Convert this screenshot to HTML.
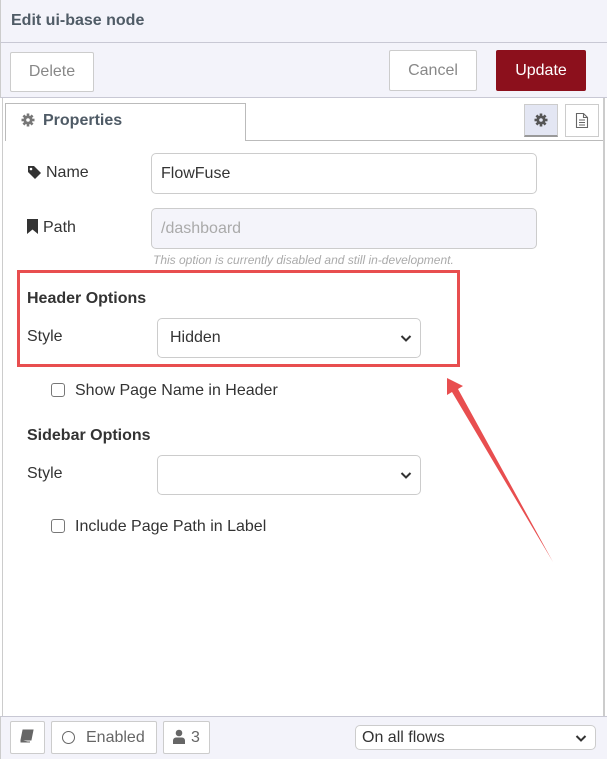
<!DOCTYPE html>
<html><head><meta charset="utf-8"><style>
*{box-sizing:border-box;margin:0;padding:0}
body{width:607px;height:759px;overflow:hidden;background:#fff;font-family:"Liberation Sans",Arial,sans-serif;font-size:16px;color:#333;position:relative}
.a{position:absolute}
.btn{position:absolute;border:1px solid #ccc;background:#fff;border-radius:2px;color:#888;text-align:center}
.inp{position:absolute;border:1px solid #ccc;border-radius:5px;background:#fff;padding-left:9px;color:#333}
.chev{position:absolute;right:8px;top:50%;margin-top:-5px}
.cb{position:absolute;width:14px;height:14px;border:1px solid #777;border-radius:3px;background:#fff}
</style></head><body>
<div class="a" style="left:0;top:0;width:607px;height:43px;background:#f3f3fa;border-bottom:1px solid #c8c8d4;border-left:1px solid #ccc"></div>
<div class="a" style="left:11px;top:12px;font-weight:bold;font-size:16px;color:#4f5b66">Edit ui-base node</div>
<div class="a" style="left:0;top:43px;width:607px;height:55px;background:#f3f3fa;border-bottom:1px solid #c8c8d4;border-left:1px solid #ccc"></div>
<div class="btn" style="left:10px;top:52px;width:84px;height:40px;line-height:38px">Delete</div>
<div class="btn" style="left:389px;top:50px;width:88px;height:41px;line-height:39px">Cancel</div>
<div class="a" style="left:496px;top:50px;width:90px;height:41px;line-height:41px;background:#8c101c;color:#fff;text-align:center;border-radius:2px">Update</div>
<div class="a" style="left:2px;top:98px;width:1px;height:618px;background:#ccc"></div>
<div class="a" style="left:603px;top:98px;width:2px;height:618px;background:#ccc"></div>
<div class="a" style="left:5px;top:140px;width:598px;height:1px;background:#bbb"></div>
<div class="a" style="left:5px;top:103px;width:241px;height:38px;background:#fff;border:1px solid #bbb;border-bottom:none"></div>
<svg class="a" style="left:21px;top:113px" width="14" height="14" viewBox="0 0 14 14"><g fill="#777"><circle cx="7" cy="7" r="4.5"/><rect x="5.7" y="0.5" width="2.6" height="13"/><rect x="0.5" y="5.7" width="13" height="2.6"/><rect x="5.7" y="0.5" width="2.6" height="13" transform="rotate(45 7 7)"/><rect x="5.7" y="0.5" width="2.6" height="13" transform="rotate(-45 7 7)"/></g><circle cx="7" cy="7" r="1.8" fill="#fff"/></svg>
<div class="a" style="left:43px;top:112px;font-weight:bold;color:#4f5b66">Properties</div>
<div class="a" style="left:524px;top:104px;width:34px;height:33px;background:#e3e6f3;border:1px solid #ccc;border-bottom:2px solid #999"></div>
<svg class="a" style="left:534px;top:113px" width="14" height="14" viewBox="0 0 14 14"><g fill="#555"><circle cx="7" cy="7" r="4.5"/><rect x="5.7" y="0.5" width="2.6" height="13"/><rect x="0.5" y="5.7" width="13" height="2.6"/><rect x="5.7" y="0.5" width="2.6" height="13" transform="rotate(45 7 7)"/><rect x="5.7" y="0.5" width="2.6" height="13" transform="rotate(-45 7 7)"/></g><circle cx="7" cy="7" r="1.8" fill="#e3e6f3"/></svg>
<div class="a" style="left:565px;top:104px;width:34px;height:33px;background:#fff;border:1px solid #ccc"></div>
<svg class="a" style="left:575px;top:112px" width="14" height="17" viewBox="0 0 14 17"><path d="M1.5 1.5h7l4 4v10h-11z M8.5 1.5v4h4 M4 8h6 M4 10.5h6 M4 13h6" fill="none" stroke="#666" stroke-width="1.1"/></svg>

<svg class="a" style="left:27px;top:165px" width="15" height="15" viewBox="0 0 15 15"><path d="M1 1h6l7 7-6 6-7-7z" fill="#333"/><circle cx="4" cy="4" r="1.3" fill="#fff"/></svg>
<div class="a" style="left:46px;top:164px">Name</div>
<div class="inp" style="left:151px;top:153px;width:386px;height:41px;line-height:39px">FlowFuse</div>
<svg class="a" style="left:27px;top:219px" width="11" height="15" viewBox="0 0 11 15"><path d="M0 0h11v15l-5.5-4.5L0 15z" fill="#333"/></svg>
<div class="a" style="left:43px;top:219px">Path</div>
<div class="inp" style="left:151px;top:208px;width:386px;height:41px;line-height:39px;background:#f4f4fa;color:#aaa">/dashboard</div>
<div class="a" style="left:153px;top:253px;font-size:12px;font-style:italic;color:#aaa">This option is currently disabled and still in-development.</div>

<div class="a" style="left:27px;top:290px;font-weight:bold;color:#333">Header Options</div>
<div class="a" style="left:27px;top:328px">Style</div>
<div class="inp" style="left:157px;top:318px;width:264px;height:40px;line-height:38px;padding-left:12px">Hidden<svg class="chev" width="12" height="10" viewBox="0 0 12 10"><path d="M1.5 3l4.5 4.5 4.5-4.5" fill="none" stroke="#333" stroke-width="2"/></svg></div>
<div class="a" style="left:17px;top:270px;width:443px;height:97px;border:3px solid #e84e4f"></div>
<div class="cb" style="left:51px;top:383px"></div>
<div class="a" style="left:75px;top:382px">Show Page Name in Header</div>

<div class="a" style="left:27px;top:427px;font-weight:bold">Sidebar Options</div>
<div class="a" style="left:27px;top:465px">Style</div>
<div class="inp" style="left:157px;top:455px;width:264px;height:40px"><svg class="chev" width="12" height="10" viewBox="0 0 12 10"><path d="M1.5 3l4.5 4.5 4.5-4.5" fill="none" stroke="#333" stroke-width="2"/></svg></div>
<div class="cb" style="left:51px;top:519px"></div>
<div class="a" style="left:75px;top:518px">Include Page Path in Label</div>

<svg class="a" style="left:0;top:0" width="607" height="759"><path d="M447 378 L463 386 L458 389 L553 562 L452 392 L447 395 Z" fill="#e84e4f"/></svg>

<div class="a" style="left:0;top:716px;width:607px;height:43px;background:#f3f3fa;border-top:1px solid #c8c8d4;border-left:1px solid #ccc"></div>
<div class="btn" style="left:10px;top:721px;width:35px;height:33px"></div>
<svg class="a" style="left:20px;top:729px" width="14" height="15" viewBox="0 0 14 15"><path d="M3 1h10l-2 10H1z M1 11l0 2h9" fill="#666" stroke="#666" stroke-width="1"/></svg>
<div class="btn" style="left:51px;top:721px;width:106px;height:33px;line-height:31px;color:#666;text-align:left;padding-left:34px">Enabled</div>
<div class="a" style="left:62px;top:731px;width:13px;height:13px;border:1.5px solid #666;border-radius:50%"></div>
<div class="btn" style="left:163px;top:721px;width:47px;height:33px;line-height:31px;color:#666;text-align:left;padding-left:27px">3</div>
<svg class="a" style="left:173px;top:729px" width="12" height="15" viewBox="0 0 12 15"><circle cx="6" cy="4" r="3.3" fill="#666"/><path d="M0 15v-3.5a3 3 0 0 1 3-3h6a3 3 0 0 1 3 3V15z" fill="#666"/></svg>
<div class="inp" style="left:355px;top:725px;width:241px;height:25px;line-height:23px;padding-left:6px;color:#333">On all flows<svg class="chev" width="12" height="10" viewBox="0 0 12 10"><path d="M1.5 3l4.5 4.5 4.5-4.5" fill="none" stroke="#333" stroke-width="2"/></svg></div>
</body></html>
